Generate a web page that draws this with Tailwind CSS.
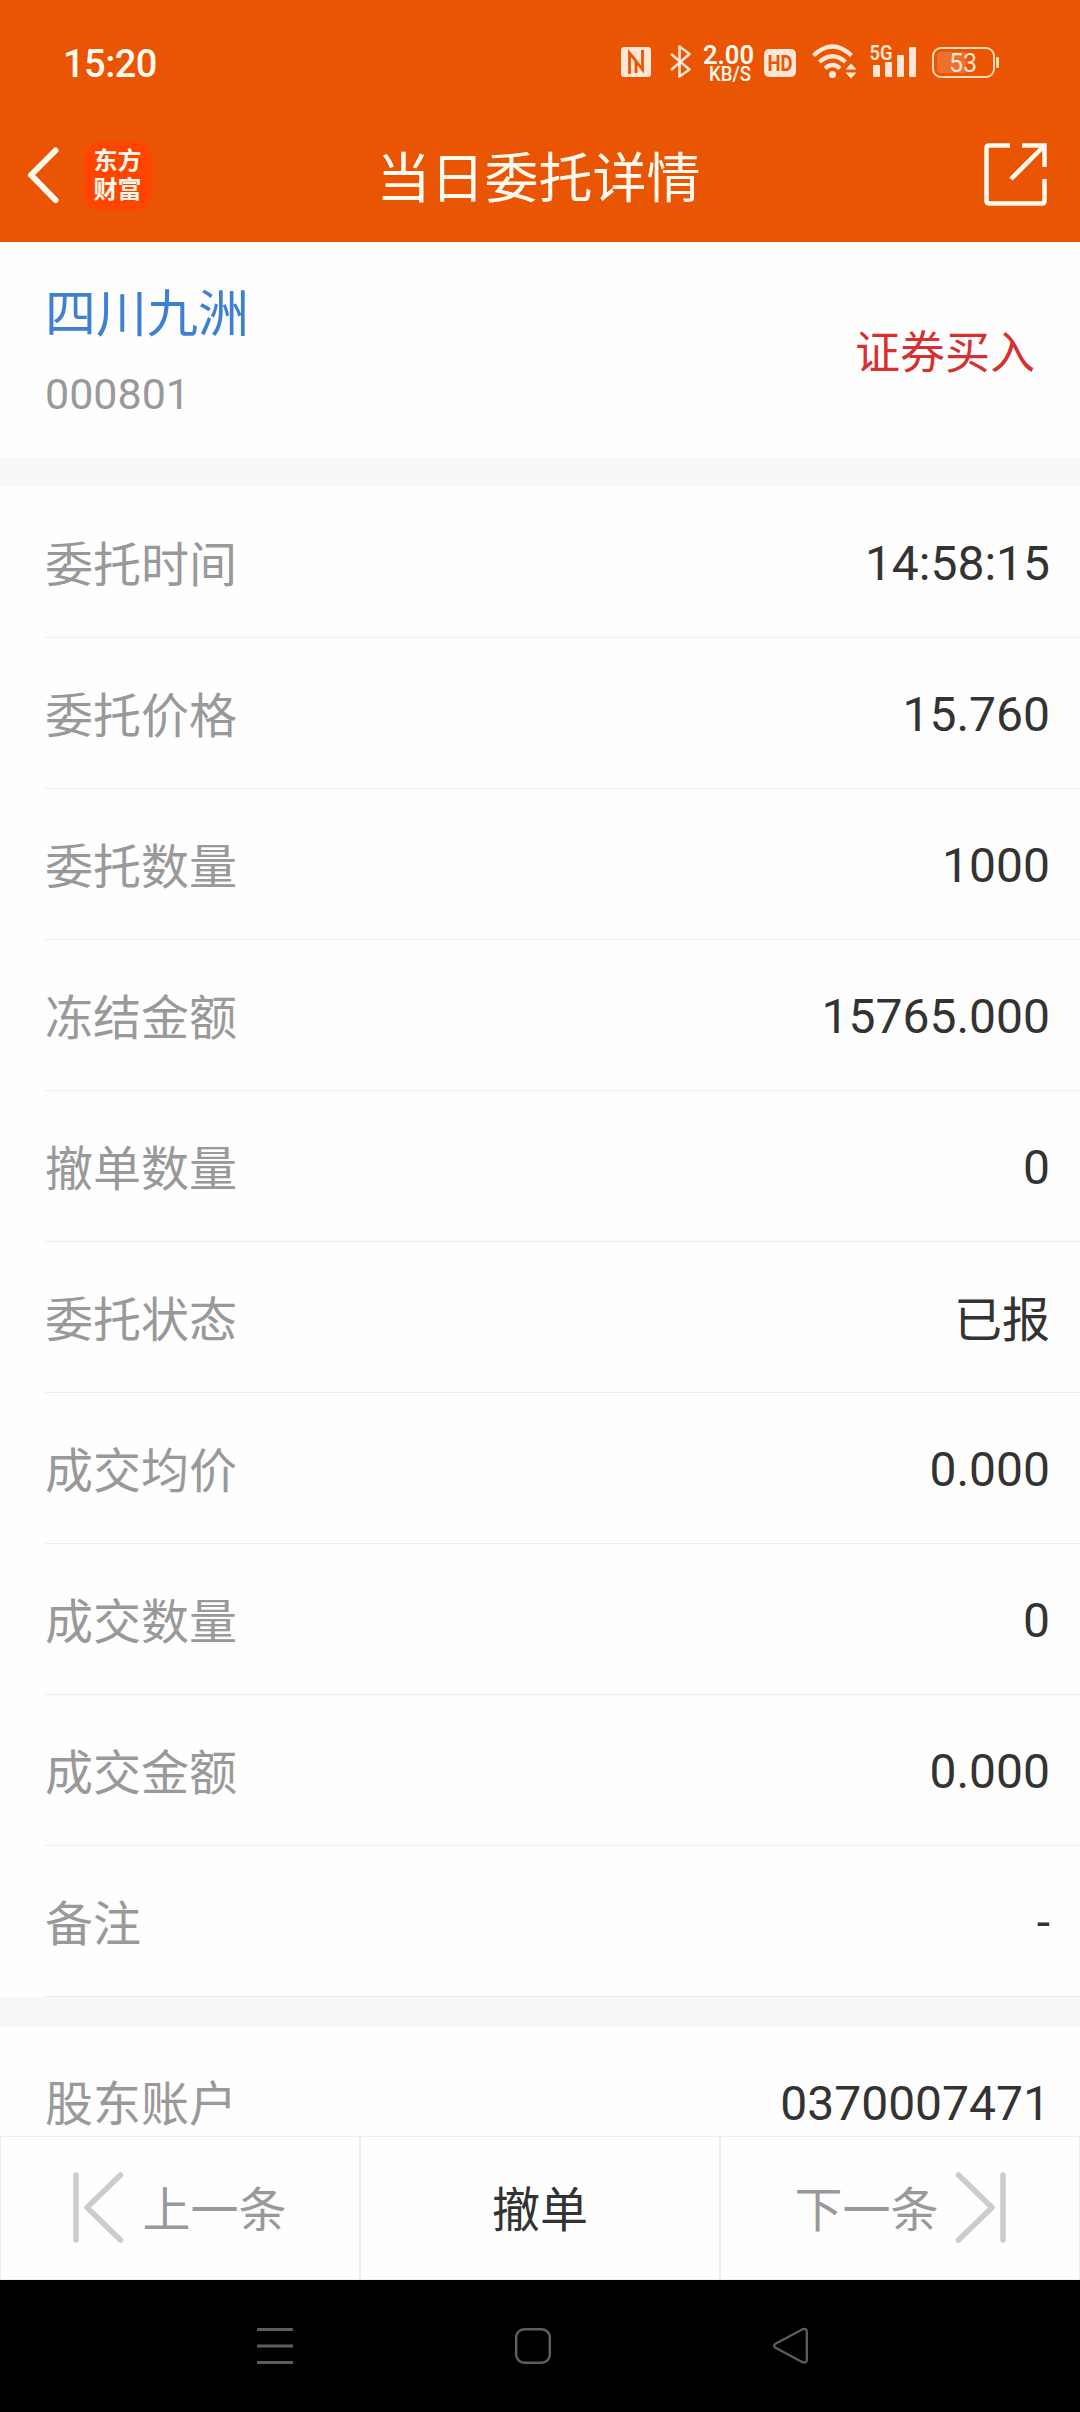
<!DOCTYPE html>
<html lang="zh-CN">
<head>
    <meta charset="UTF-8">
    <meta name="viewport" content="width=device-width, initial-scale=1.0">
    <title>当日委托详情</title>
    <script src="https://cdn.jsdelivr.net/npm/@tailwindcss/browser@4"></script>
</head>
<body class="bg-[#fefefe] font-['Roboto','Noto_Sans_CJK_SC',sans-serif]">
    <div class="w-[1080px] h-[2412px] flex flex-col overflow-hidden">
        <!-- 顶部 -->
        <header class="h-[242px] shrink-0 bg-[#ea5504] text-[#fffaf0]">
            <!-- 状态栏 -->
            <div class="h-[110px] pl-[63px] pr-20 pt-4 flex items-center justify-between">
                <span class="text-[38px] leading-none font-medium tracking-[-0.5px] pt-0.5">15:20</span>
                <svg class="w-[380px] h-[50px]" viewBox="620 38 380 50" fill="none">
                    <!-- NFC -->
                    <rect x="621" y="47" width="30" height="30" rx="3" fill="#ffe6d5"/>
                    <path d="M629.5 74V53L642.500 69.500V60M642.500 60V50M629.500 53L636 61V73" stroke="#ea5504" stroke-width="2.800"/>
                    <!-- 蓝牙 -->
                    <path d="M671 54L689.500 69.500L679.500 76.500V46.500L689.500 54L671 70" stroke="#ffe6d5" stroke-width="2.600" stroke-linejoin="round"/>
                    <text x="703" y="64" font-size="26" font-weight="600" textLength="51" lengthAdjust="spacingAndGlyphs" fill="#fffaf0">2.00</text>
                    <text x="709" y="81" font-size="19.500" font-weight="500" textLength="42" lengthAdjust="spacingAndGlyphs" fill="#fffaf0">KB/S</text>
                    <rect x="764" y="49" width="32" height="28" rx="5" fill="#ffe6d5"/>
                    <text x="767.500" y="71" font-size="22" font-weight="700" textLength="25" lengthAdjust="spacingAndGlyphs" fill="#ea5504">HD</text>
                    <!-- Wi-Fi -->
                    <g stroke="#ffe6d5" stroke-width="4.200">
                        <path d="M813.500 55.500Q832.500 37.500 851.500 55.500"/>
                        <path d="M819.500 62Q832.500 50.500 845.500 62"/>
                        <path d="M825 68.500Q832.500 61.500 840 68.500"/>
                    </g>
                    <circle cx="832.500" cy="74.500" r="3.500" fill="#ffe6d5"/>
                    <path d="M845.500 69.500L851 63.500L856.500 69.500ZM845.500 72.500H856.500L851 78.500Z" fill="#ffe6d5"/>
                    <!-- 信号 -->
                    <text x="869.500" y="60" font-size="20" font-weight="600" textLength="23" lengthAdjust="spacingAndGlyphs" fill="#ffe6d5">5G</text>
                    <g fill="#ffe6d5">
                        <rect x="873" y="65" width="7" height="12" rx="1"/>
                        <rect x="885" y="62" width="7" height="15" rx="1"/>
                        <rect x="897" y="55" width="7" height="22" rx="1"/>
                        <rect x="909" y="47" width="7" height="30" rx="1"/>
                    </g>
                    <!-- 电量 -->
                    <rect x="933" y="48" width="61" height="29" rx="8" stroke="#ffd9b8" stroke-width="2"/>
                    <path d="M941 52H966V73H941Q937 73 937 69V56Q937 52 941 52Z" fill="#fff" fill-opacity=".16"/>
                    <rect x="996" y="57" width="3" height="11" rx="1" fill="#ffd9b8"/>
                    <text x="949" y="72" font-size="25" textLength="28" fill="#ffe6d5">53</text>
                </svg>
            </div>
            <!-- 标题栏 -->
            <div class="h-[132px] pl-[24px] pr-[30px] grid grid-cols-[1fr_auto_1fr] items-center">
                <div class="flex items-center gap-[21px]">
                    <svg class="w-[38px] h-[60px]" viewBox="0 0 38 60" fill="none" stroke="#fffaf0" stroke-width="6" stroke-linecap="round" stroke-linejoin="round">
                        <path d="M31.500 4.500L7 29L31.500 54"/>
                    </svg>
                    <div class="w-[67px] h-[68px] ml-px rounded-[15px] bg-[#ff4500] flex flex-col items-center justify-center text-2xl leading-[29px] font-bold">
                        <span>东方</span>
                        <span>财富</span>
                    </div>
                </div>
                <h1 class="text-[54px] leading-none pt-[7px] pl-[3px]">当日委托详情</h1>
                <svg class="w-[68px] h-[68px] justify-self-end" viewBox="982 142 68 68" fill="none" stroke="#fffaf0" stroke-width="4.500">
                    <path d="M1010 145.500H989Q986.500 145.500 986.500 148V201Q986.500 203.500 989 203.500H1042Q1044.500 203.500 1044.500 201V179"/>
                    <path d="M1022 145.500H1044.500V167M1044.500 145.500L1011 179"/>
                </svg>
            </div>
        </header>

        <!-- 股票信息 -->
        <section class="h-[215px] shrink-0 pl-[45px] pr-[45px] pt-2 flex items-center justify-between">
            <div>
                <div class="text-[51px] leading-[80px] text-[#3f80d2]">四川九洲</div>
                <div class="text-[43px] leading-[78px] text-[#999]">000801</div>
            </div>
            <div class="text-[45px] text-[#d83030]">证券买入</div>
        </section>
        <div class="h-[30px] shrink-0 bg-[#f7f8fa]"></div>

        <!-- 委托明细 -->
        <main class="h-[1649px] shrink-0 overflow-hidden text-5xl text-[#333]">
            <div class="ml-[45px]">
                <div class="h-[151px] pt-[3px] pr-[30px] border-b border-[#eee] flex items-center justify-between"><span class="text-[#999] pt-1">委托时间</span><span>14:58:15</span></div>
                <div class="h-[151px] pt-[3px] pr-[30px] border-b border-[#eee] flex items-center justify-between"><span class="text-[#999] pt-1">委托价格</span><span>15.760</span></div>
                <div class="h-[151px] pt-[3px] pr-[30px] border-b border-[#eee] flex items-center justify-between"><span class="text-[#999] pt-1">委托数量</span><span>1000</span></div>
                <div class="h-[151px] pt-[3px] pr-[30px] border-b border-[#eee] flex items-center justify-between"><span class="text-[#999] pt-1">冻结金额</span><span>15765.000</span></div>
                <div class="h-[151px] pt-[3px] pr-[30px] border-b border-[#eee] flex items-center justify-between"><span class="text-[#999] pt-1">撤单数量</span><span>0</span></div>
                <div class="h-[151px] pt-[3px] pr-[30px] border-b border-[#eee] flex items-center justify-between"><span class="text-[#999] pt-1">委托状态</span><span class="pt-1">已报</span></div>
                <div class="h-[151px] pt-[3px] pr-[30px] border-b border-[#eee] flex items-center justify-between"><span class="text-[#999] pt-1">成交均价</span><span>0.000</span></div>
                <div class="h-[151px] pt-[3px] pr-[30px] border-b border-[#eee] flex items-center justify-between"><span class="text-[#999] pt-1">成交数量</span><span>0</span></div>
                <div class="h-[151px] pt-[3px] pr-[30px] border-b border-[#eee] flex items-center justify-between"><span class="text-[#999] pt-1">成交金额</span><span>0.000</span></div>
                <div class="h-[151px] pt-[3px] pr-[30px] border-b border-[#eee] flex items-center justify-between"><span class="text-[#999] pt-1">备注</span><span>-</span></div>
            </div>
            <div class="h-[30px] bg-[#f7f8fa]"></div>
            <div class="ml-[45px] h-[151px] pt-px pr-[30px] flex items-center justify-between"><span class="text-[#999] pt-1">股东账户</span><span class="pt-px">0370007471</span></div>
        </main>

        <!-- 底部操作 -->
        <div class="h-[144px] shrink-0 grid grid-cols-3 text-5xl text-[#999]">
            <button class="border border-[#eee] flex items-center justify-center gap-[17px]">
                <svg class="w-[52px] h-[72px]" viewBox="0 0 52 72" fill="none" stroke="#ccc" stroke-width="5.500" stroke-linecap="round" stroke-linejoin="round">
                    <path d="M3 3V68M47.500 3L14 35.500L47.500 68"/>
                </svg>
                <span class="pt-1.5">上一条</span>
            </button>
            <button class="border border-[#eee] text-[#333] pt-1.5">撤单</button>
            <button class="border border-[#eee] flex items-center justify-center gap-[15px]">
                <span class="pt-1.5">下一条</span>
                <svg class="w-[52px] h-[72px]" viewBox="0 0 52 72" fill="none" stroke="#ccc" stroke-width="5.500" stroke-linecap="round" stroke-linejoin="round">
                    <path d="M4.500 3L38 35.500L4.500 68M49 3V68"/>
                </svg>
            </button>
        </div>

        <!-- 系统导航 -->
        <nav class="h-[132px] shrink-0 bg-black pl-[255px] pr-[269px] flex items-center justify-between">
            <svg class="size-10" viewBox="0 0 40 40" fill="none" stroke="#5e5e5e" stroke-width="3">
                <path d="M2 3.500H38M2 20H38M2 36.500H38"/>
            </svg>
            <svg class="size-10" viewBox="0 0 40 40" fill="none" stroke="#5e5e5e" stroke-width="2.500">
                <rect x="3.200" y="3.200" width="33.600" height="33.600" rx="8"/>
            </svg>
            <svg class="size-10" viewBox="0 0 40 40" fill="none" stroke="#5e5e5e" stroke-width="2.300">
                <path d="M4.500 17.800L31.500 3.200Q35.800 2 35.800 6V33.500Q35.800 37.800 31.500 36.200L4.500 21.800Q1.500 19.800 4.500 17.800Z"/>
            </svg>
        </nav>
    </div>
</body>
</html>
